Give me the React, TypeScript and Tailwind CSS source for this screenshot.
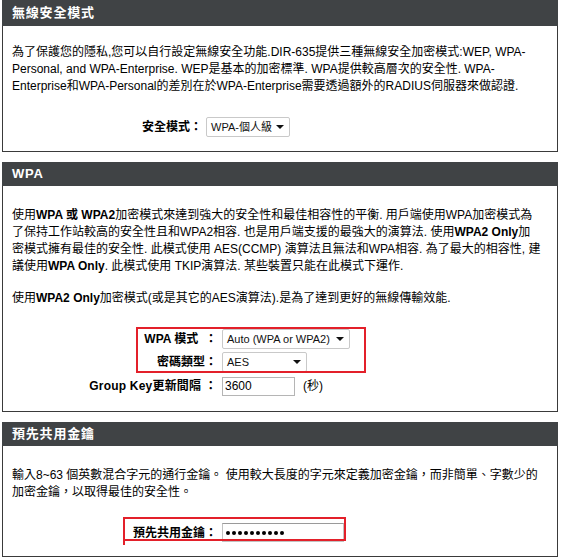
import React from "react";

const FONT = "font-['Liberation_Sans','Noto_Sans_CJK_TC',sans-serif]";

function Arrow() {
  return (
    <svg width="8" height="4" viewBox="0 0 8 4" className="shrink-0">
      <path d="M0 0h8L4 4z" fill="#111" />
    </svg>
  );
}

function Select({ text, w }: { text: string; w: string }) {
  return (
    <div
      className={`${w} h-[20px] border border-[#c9c9c9] rounded-[2px] bg-white flex items-center justify-between pl-[4px] pr-[5px] text-[11px] text-[#111] leading-none`}
    >
      <span className="whitespace-nowrap">{text}</span>
      <Arrow />
    </div>
  );
}

function Header({ title, first }: { title: string; first?: boolean }) {
  return (
    <div
      className={`bg-[#404345] text-white font-bold text-[13px] tracking-[0.8px] pl-[10px] flex items-center ${
        first ? "h-[26px]" : "h-[24px]"
      }`}
    >
      {title}
    </div>
  );
}

function Line({ children }: { children: React.ReactNode }) {
  return <div className="whitespace-nowrap h-[17px] leading-[17px]">{children}</div>;
}

export default function App() {
  return (
    <div className={`w-[562px] h-[557px] bg-white overflow-hidden text-black ${FONT}`}>
      <div className="ml-[2px] w-[556px] flex flex-col gap-[10px]">
        {/* Section 1 */}
        <div>
          <Header title="無線安全模式" first />
          <div className="h-[126px] border-x border-b border-[#3a3a3a] pt-[18px] pl-[9px] text-[12px]">
            <Line>為了保護您的隱私,您可以自行設定無線安全功能.DIR-635提供三種無線安全加密模式:WEP, WPA-</Line>
            <Line>Personal, and WPA-Enterprise. WEP是基本的加密標準. WPA提供較高層次的安全性. WPA-</Line>
            <Line>Enterprise和WPA-Personal的差別在於WPA-Enterprise需要透過額外的RADIUS伺服器來做認證.</Line>
            <div className="flex items-center mt-[22px] -ml-[9px]">
              <div className="w-[199px] text-right font-bold text-[12px] whitespace-nowrap">安全模式：</div>
              <div className="ml-[4px]">
                <Select text="WPA-個人級" w="w-[84px]" />
              </div>
            </div>
          </div>
        </div>

        {/* Section 2 */}
        <div>
          <Header title="WPA" />
          <div className="relative h-[226px] border-x border-b border-[#3a3a3a] pt-[21px] pl-[9px] text-[12px]">
            <Line>
              使用<b>WPA 或 WPA2</b>加密模式來達到強大的安全性和最佳相容性的平衡. 用戶端使用WPA加密模式為
            </Line>
            <Line>
              了保持工作站較高的安全性且和WPA2相容. 也是用戶端支援的最強大的演算法. 使用<b>WPA2 Only</b>加
            </Line>
            <Line>密模式擁有最佳的安全性. 此模式使用 AES(CCMP) 演算法且無法和WPA相容. 為了最大的相容性, 建</Line>
            <Line>
              議使用<b>WPA Only</b>. 此模式使用 TKIP演算法. 某些裝置只能在此模式下運作.
            </Line>
            <div className="mt-[15px]">
              <Line>
                使用<b>WPA2 Only</b>加密模式(或是其它的AES演算法).是為了達到更好的無線傳輸效能.
              </Line>
            </div>
            <div className="-ml-[9px] mt-[22px] flex flex-col">
              <div className="flex items-center h-[20px]">
                <div className="w-[214px] text-right font-bold text-[12px] whitespace-nowrap">WPA 模式&nbsp;&nbsp;：</div>
                <div className="ml-[5px]">
                  <Select text="Auto (WPA or WPA2)" w="w-[128px]" />
                </div>
              </div>
              <div className="flex items-center h-[20px] mt-[3px]">
                <div className="w-[214px] text-right font-bold text-[12px] whitespace-nowrap">密碼類型：</div>
                <div className="ml-[5px]">
                  <Select text="AES" w="w-[85px]" />
                </div>
              </div>
              <div className="flex items-center h-[20px] mt-[4px]">
                <div className="w-[214px] text-right font-bold text-[12px] whitespace-nowrap tracking-[0.2px]">Group Key更新間隔 ：</div>
                <div className="ml-[5px] w-[73px] h-[19px] border border-[#b5b5b5] bg-white text-[12px] leading-[17px] pl-[2px]">
                  3600
                </div>
                <div className="ml-[8px] text-[12px]">(秒)</div>
              </div>
            </div>
            <div className="absolute left-[133px] top-[141px] w-[230px] h-[46px] border-2 border-[#e3202a]" />
          </div>
        </div>

        {/* Section 3 */}
        <div>
          <Header title="預先共用金鑰" />
          <div className="relative h-[111px] border-x border-b border-[#3a3a3a] pt-[21px] pl-[9px] text-[12px]">
            <Line>輸入8~63 個英數混合字元的通行金鑰。 使用較大長度的字元來定義加密金鑰，而非簡單、字數少的</Line>
            <Line>加密金鑰，以取得最佳的安全性。</Line>
            <div className="-ml-[9px] mt-[22px] flex items-center">
              <div className="w-[214px] text-right font-bold text-[12px] whitespace-nowrap">預先共用金鑰：</div>
              <div className="ml-[5px] w-[122px] h-[19px] border border-[#c2c2c2] border-t-[#9a9a9a] bg-white flex items-center gap-[2px] pl-[3px]">
                {Array.from({ length: 10 }).map((_, i) => (
                  <div key={i} className="w-[4px] h-[4px] rounded-full bg-black" />
                ))}
              </div>
            </div>
            <div className="absolute left-[120px] top-[71px] w-[223px] h-[24px] border-2 border-[#e3202a]" />
            <div className="absolute left-[120px] top-[94px] w-[2px] h-[5px] bg-[#e3202a]" />
          </div>
        </div>
      </div>
    </div>
  );
}
